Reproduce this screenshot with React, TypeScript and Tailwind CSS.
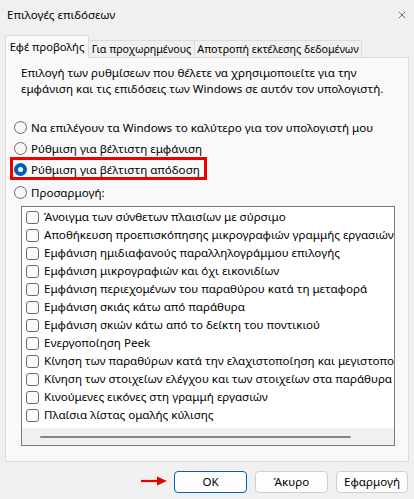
import { X } from 'lucide-react';

const effects = [
  'Άνοιγμα των σύνθετων πλαισίων με σύρσιμο',
  'Αποθήκευση προεπισκόπησης μικρογραφιών γραμμής εργασιών',
  'Εμφάνιση ημιδιαφανούς παραλληλογράμμου επιλογής',
  'Εμφάνιση μικρογραφιών και όχι εικονιδίων',
  'Εμφάνιση περιεχομένων του παραθύρου κατά τη μεταφορά',
  'Εμφάνιση σκιάς κάτω από παράθυρα',
  'Εμφάνιση σκιών κάτω από το δείκτη του ποντικιού',
  'Ενεργοποίηση Peek',
  'Κίνηση των παραθύρων κατά την ελαχιστοποίηση και μεγιστοποίηση',
  'Κίνηση των στοιχείων ελέγχου και των στοιχείων στα παράθυρα',
  'Κινούμενες εικόνες στη γραμμή εργασιών',
  'Πλαίσια λίστας ομαλής κύλισης',
];

function Radio({ label, checked }: { label: string; checked?: boolean }) {
  return (
    <div className="flex items-center h-[21px] gap-[4px]">
      {checked ? (
        <span className="w-[13px] h-[13px] rounded-full bg-[#005fb8] flex items-center justify-center shrink-0">
          <span className="w-[5px] h-[5px] rounded-full bg-white" />
        </span>
      ) : (
        <span className="w-[13px] h-[13px] rounded-full border border-[#6b6b6b] bg-[#f7f7f7] shrink-0" />
      )}
      <span className="whitespace-nowrap">{label}</span>
    </div>
  );
}

export default function App() {
  return (
    <div
      className="w-[414px] h-[499px] bg-[#f0f0f0] text-black text-[11.6px] leading-[16px] flex flex-col overflow-hidden whitespace-nowrap"
      style={{ fontFamily: '"Segoe UI", "Noto Sans", sans-serif' }}
    >
      <div className="h-[29px] flex items-center justify-between pl-[7px] pr-[6px] shrink-0">
        <span>Επιλογές επιδόσεων</span>
        <X className="w-[12px] h-[12px] text-[#333]" strokeWidth={1.3} />
      </div>

      <div className="flex items-end pl-[5px] h-[28px] shrink-0 text-[10.7px]">
        <div className="h-[23px] w-[84px] pt-[3px] border border-b-0 border-[#dcdcdc] bg-[#f9f9f9] -mb-px relative z-10 flex justify-center text-[11.2px]">
          Εφέ προβολής
        </div>
        <div className="h-[17px] w-[106px] border border-l-0 border-b-0 border-[#dcdcdc] bg-[#f0f0f0] flex items-center justify-center">
          Για προχωρημένους
        </div>
        <div className="h-[17px] w-[167px] border border-l-0 border-b-0 border-[#dcdcdc] bg-[#f0f0f0] flex items-center justify-center">
          Αποτροπή εκτέλεσης δεδομένων
        </div>
      </div>

      <div className="mx-[5px] h-[405px] border border-[#dcdcdc] bg-[#f9f9f9] pl-[15px] pr-[13px] pt-[7px] shrink-0 flex flex-col">
        <p className="leading-[16px]">
          Επιλογή των ρυθμίσεων που θέλετε να χρησιμοποιείτε για την
          <br />
          εμφάνιση και τις επιδόσεις των Windows σε αυτόν τον υπολογιστή.
        </p>

        <div className="mt-[20px] -ml-[7px] flex flex-col">
          <Radio label="Να επιλέγουν τα Windows το καλύτερο για τον υπολογιστή μου" />
          <Radio label="Ρύθμιση για βέλτιστη εμφάνιση" />
          <div className="relative">
            <Radio label="Ρύθμιση για βέλτιστη απόδοση" checked />
            <div className="absolute left-[-4px] top-[-2px] w-[197px] h-[23px] border-[3px] border-[#ee0000]" />
          </div>
          <div className="mt-[2px]">
            <Radio label="Προσαρμογή:" />
          </div>
        </div>

        <div className="mt-[3px] h-[240px] border border-[#7a7a7a] bg-white flex flex-col overflow-hidden">
          <div className="flex-1 pt-[1px] pl-[4px] overflow-hidden">
            {effects.map((e) => (
              <div key={e} className="h-[18px] flex items-center gap-[5px]">
                <span className="w-[13px] h-[13px] rounded-[3px] border border-[#6b6b6b] bg-[#fbfbfb] shrink-0" />
                <span>{e}</span>
              </div>
            ))}
          </div>
          <div className="h-[17px] bg-[#f0f0f0] flex items-center pl-[18px] shrink-0">
            <div className="w-[311px] h-[2px] bg-[#858585] rounded-full" />
          </div>
        </div>
      </div>

      <div className="flex justify-end gap-[8px] pr-[6px] mt-[9px] relative">
        <div className="relative">
          <svg className="absolute left-[-33px] top-[5px]" width="27" height="10" viewBox="0 0 27 10">
            <line x1="0" y1="5" x2="18" y2="5" stroke="#e60000" strokeWidth="2.2" />
            <polygon points="16,0.5 26,5 16,9.5" fill="#e60000" />
          </svg>
          <button className="w-[73px] h-[22px] rounded-[4px] border border-[#005fb8] bg-[#fdfdfd] flex items-center justify-center">
            OK
          </button>
        </div>
        <button className="w-[73px] h-[22px] rounded-[4px] border border-[#d0d0d0] bg-[#fdfdfd] flex items-center justify-center">
          Άκυρο
        </button>
        <button className="w-[72px] h-[22px] rounded-[4px] border border-[#d0d0d0] bg-[#fdfdfd] flex items-center justify-center">
          Εφαρμογή
        </button>
      </div>
    </div>
  );
}
